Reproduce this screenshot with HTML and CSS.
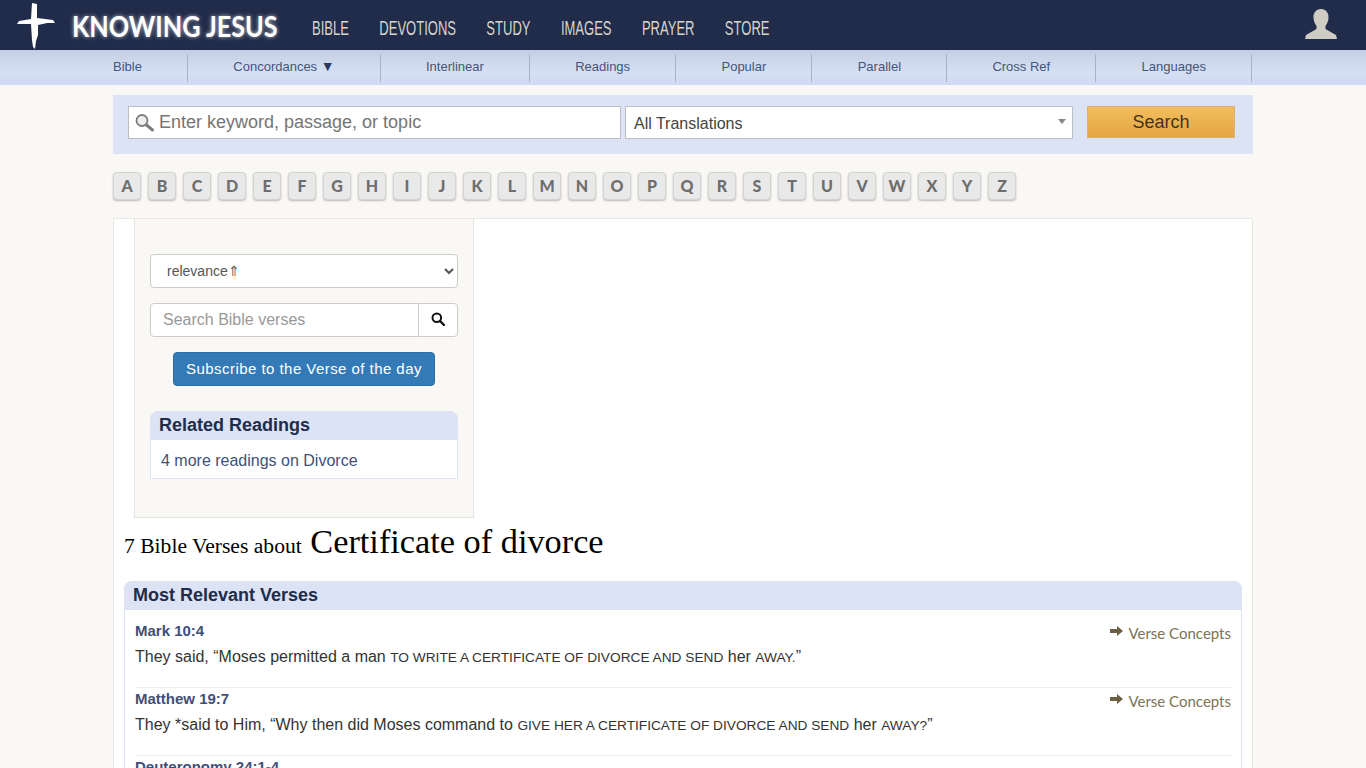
FILE: index.html
```html
<!DOCTYPE html>
<html lang="en">
<head>
    <meta charset="UTF-8">
    <title>7 Bible Verses about Certificate of divorce</title>
    <link rel="stylesheet" href="styles.css">
</head>
<body>

<!-- top bar -->
<header class="topbar">
    <a class="logo" href="#">
        <svg class="logo-cross" width="38" height="50" viewBox="0 0 38 50">
            <path fill="#fff" d="M15 3 L20 4 L20 18 L36 20 L38 23 L30 23 L21 25 L21 35 L19 41 L18 49 L16 47 L15 40 L14 24 L6 24 L0 24 L2 21 L14 19 Z"/>
        </svg>
        <span class="logo-text">KNOWING JESUS</span>
    </a>
    <nav class="mainnav">
        <a href="#">BIBLE</a>
        <a href="#">DEVOTIONS</a>
        <a href="#">STUDY</a>
        <a href="#">IMAGES</a>
        <a href="#">PRAYER</a>
        <a href="#">STORE</a>
    </nav>
    <svg class="user-icon" width="32" height="30" viewBox="0 0 32 30">
        <path fill="#cfccc4" d="M16 0 C21 0 24 4 23.500 9 C23.300 12 22 15 20.500 17 L20.500 20 L31 26 L32 30 L0 30 L1 26 L11.500 20 L11.500 17 C10 15 8.700 12 8.500 9 C8 4 11 0 16 0 Z"/>
    </svg>
</header>

<!-- second nav -->
<div class="subbar">
    <ul class="subnav">
        <li><a href="#">Bible</a></li>
        <li><a href="#">Concordances <span class="down">▼</span></a></li>
        <li><a href="#">Interlinear</a></li>
        <li><a href="#">Readings</a></li>
        <li><a href="#">Popular</a></li>
        <li><a href="#">Parallel</a></li>
        <li><a href="#">Cross Ref</a></li>
        <li><a href="#">Languages</a></li>
    </ul>
</div>

<div class="wrap">

    <form class="searchbar">
        <div class="keyword">
            <svg width="20" height="20" viewBox="0 0 20 20">
                <circle cx="7" cy="7.500" r="5.500" fill="#eee" stroke="#7d7d7d" stroke-width="1.800"/>
                <path d="M11.500 12 L17.500 17" stroke="#7d7d7d" stroke-width="3" stroke-linecap="round"/>
            </svg>
            <input type="text" placeholder="Enter keyword, passage, or topic">
        </div>
        <div class="translations">All Translations</div>
        <button type="button" class="search-btn">Search</button>
    </form>

    <div class="letters">
        <a href="#">A</a><a href="#">B</a><a href="#">C</a><a href="#">D</a><a href="#">E</a><a href="#">F</a><a href="#">G</a><a href="#">H</a><a href="#">I</a><a href="#">J</a><a href="#">K</a><a href="#">L</a><a href="#">M</a><a href="#">N</a><a href="#">O</a><a href="#">P</a><a href="#">Q</a><a href="#">R</a><a href="#">S</a><a href="#">T</a><a href="#">U</a><a href="#">V</a><a href="#">W</a><a href="#">X</a><a href="#">Y</a><a href="#">Z</a>
    </div>

    <main class="content">
        <aside class="sidebar">
            <select class="sort">
                <option>relevance⇑</option>
            </select>
            <div class="versesearch">
                <input type="text" placeholder="Search Bible verses">
                <button type="button">
                    <svg width="14" height="14" viewBox="0 0 14 14">
                        <circle cx="5.800" cy="5.800" r="4.300" fill="none" stroke="#111" stroke-width="2"/>
                        <path d="M9 9 L13 13" stroke="#111" stroke-width="2.400" stroke-linecap="round"/>
                    </svg>
                </button>
            </div>
            <a class="subscribe" href="#">Subscribe to the Verse of the day</a>
            <section class="panel related">
                <h3>Related Readings</h3>
                <div class="panel-body"><a href="#">4 more readings on Divorce</a></div>
            </section>
        </aside>

        <h1 class="title"><span class="count">7 Bible Verses about</span> Certificate of divorce</h1>

        <section class="panel verses">
            <h3>Most Relevant Verses</h3>
            <div class="panel-body">
                <article class="verse">
                    <a class="concepts" href="#">
                        <svg width="13" height="10" viewBox="0 0 13 10"><path fill="#6c5f42" d="M0 3 H7 V0 L13 5 L7 10 V7 H0 Z"/></svg>
                        Verse Concepts
                    </a>
                    <a class="ref" href="#">Mark 10:4</a>
                    <p>They said, “Moses permitted a man <span class="sc">to write a certificate of divorce and send</span> her <span class="sc">away.</span>”</p>
                </article>
                <article class="verse">
                    <a class="concepts" href="#">
                        <svg width="13" height="10" viewBox="0 0 13 10"><path fill="#6c5f42" d="M0 3 H7 V0 L13 5 L7 10 V7 H0 Z"/></svg>
                        Verse Concepts
                    </a>
                    <a class="ref" href="#">Matthew 19:7</a>
                    <p>They *said to Him, “Why then did Moses command to <span class="sc">give her a certificate of divorce and send</span> her <span class="sc">away?</span>”</p>
                </article>
                <article class="verse">
                    <a class="ref" href="#">Deuteronomy 24:1-4</a>
                </article>
            </div>
        </section>
    </main>
</div>

</body>
</html>
```

FILE: styles.css
```css
html, body {
    height: 768px;
    overflow: hidden;
}

body {
    margin: 0;
    background-color: #f9f8f5;
    font-family: "Liberation Sans", Arial, sans-serif;
    color: #333;
}

a {
    text-decoration: none;
}

/* top bar */
.topbar {
    display: flex;
    align-items: flex-start;
    height: 50px;
    padding-left: 17px;
    padding-right: 29px;
    background-color: #212c4a;
}

.logo {
    display: flex;
    align-items: flex-start;
}

.logo-text {
    margin-left: 17px;
    margin-top: 8px;
    font-family: Lato, sans-serif;
    font-weight: 700;
    font-size: 29px;
    line-height: 35px;
    color: #fff;
    text-shadow: 0 0 5px rgba(255, 255, 255, 0.7);
    transform: scaleX(0.87);
    transform-origin: left;
}

/* no narrow font here, so the row is squeezed */
.mainnav {
    display: flex;
    gap: 49px;
    margin-left: 4px;
    margin-top: 16px;
    transform: scaleX(0.62);
    transform-origin: left;
}

.mainnav a {
    font-size: 21px;
    line-height: 23px;
    color: #d8d5cb;
}

.user-icon {
    margin-left: auto;
    margin-top: 9px;
}

/* second nav */
.subbar {
    height: 35px;
    background: linear-gradient(#c5cfe3, #d5dff4 60%, #cfdaf3);
}

.subnav {
    display: flex;
    width: 1140px;
    height: 28px;
    margin: 0 auto;
    padding: 4px 0 0;
    list-style: none;
}

.subnav li {
    flex: none;
    padding: 0 45.2px;
    border-right: 1px solid #a9b1c2;
    font-size: 13px;
    line-height: 25px;
    white-space: nowrap;
}

.subnav li:first-child {
    padding-left: 0;
}

.subnav a {
    color: #44557b;
}

.subnav .down {
    color: #2a3a5f;
    font-size: 14px;
    line-height: 13px;
}

/* search strip */
.wrap {
    width: 1140px;
    margin: 0 auto;
}

.searchbar {
    display: flex;
    align-items: flex-start;
    height: 59px;
    margin-top: 10px;
    padding: 11px 18px 0 15px;
    box-sizing: border-box;
    background-color: #dce3f4;
}

.keyword {
    display: flex;
    align-items: center;
    width: 493px;
    height: 33px;
    box-sizing: border-box;
    padding-left: 6px;
    background-color: #fff;
    border: 1px solid #b9bdc6;
}

.keyword input {
    flex: 1;
    min-width: 0;
    margin-left: 4px;
    padding: 0;
    border: none;
    outline: none;
    font-family: inherit;
    font-size: 18px;
}

.keyword input::placeholder {
    color: #757575;
    opacity: 1;
}

.translations {
    position: relative;
    width: 448px;
    height: 33px;
    box-sizing: border-box;
    margin-left: 4px;
    padding-left: 8px;
    background-color: #fff;
    border: 1px solid #bcbfc6;
    font-size: 16px;
    line-height: 33px;
    color: #444;
}

.translations::after {
    content: "";
    position: absolute;
    top: 12px;
    right: 6px;
    border-top: 5px solid #888;
    border-left: 4px solid transparent;
    border-right: 4px solid transparent;
}

.search-btn {
    width: 148px;
    height: 32px;
    margin-left: 14px;
    padding: 0;
    background: linear-gradient(#f3bd5f, #e2a641);
    border: 1px solid #d8b27a;
    font-family: inherit;
    font-size: 18px;
    color: #44341d;
}

/* A-Z */
.letters {
    display: flex;
    gap: 7px;
    margin-top: 18px;
}

.letters a {
    width: 28px;
    height: 28px;
    box-sizing: border-box;
    background-color: #e9e9e9;
    border: 1px solid #d4d4d4;
    border-radius: 4px;
    box-shadow: 0 1px 2px rgba(0, 0, 0, 0.25);
    font-family: Lato, sans-serif;
    font-weight: 900;
    font-size: 16px;
    line-height: 26px;
    text-align: center;
    color: #6e6e6e;
}

/* main card */
.content {
    margin-top: 18px;
    padding: 0 10px 40px;
    background-color: #fff;
    border: 1px solid #e9e8e5;
}

.sidebar {
    width: 340px;
    height: 299px;
    box-sizing: border-box;
    margin-left: 10px;
    padding: 35px 15px 0;
    background-color: #f9f8f5;
    border: 1px solid #e6e5e2;
    border-top: none;
}

.sort {
    display: block;
    width: 100%;
    height: 34px;
    padding: 6px 12px;
    background-color: #fff;
    border: 1px solid #ccc;
    border-radius: 4px;
    font-family: inherit;
    font-size: 14px;
    color: #555;
}

.versesearch {
    display: flex;
    height: 34px;
    margin-top: 15px;
}

.versesearch input {
    flex: 1;
    min-width: 0;
    padding: 6px 12px;
    background-color: #fff;
    border: 1px solid #ccc;
    border-radius: 4px 0 0 4px;
    outline: none;
    font-family: inherit;
    font-size: 16px;
}

.versesearch input::placeholder {
    color: #999;
    opacity: 1;
}

.versesearch button {
    width: 40px;
    margin-left: -1px;
    padding: 0;
    background-color: #fff;
    border: 1px solid #ccc;
    border-radius: 0 4px 4px 0;
}

.subscribe {
    display: block;
    width: 262px;
    height: 34px;
    box-sizing: border-box;
    margin: 15px auto 0;
    background-color: #337ab7;
    border: 1px solid #2e6da4;
    border-radius: 4px;
    font-size: 15px;
    line-height: 32px;
    letter-spacing: 0.45px;
    text-align: center;
    color: #fff;
}

/* panels */
.panel h3 {
    margin: 0;
    height: 29px;
    padding-left: 9px;
    background-color: #dce3f4;
    border-radius: 8px 8px 0 0;
    font-size: 18px;
    line-height: 29px;
    color: #212c4a;
}

.panel-body {
    background-color: #fff;
    border: 1px solid #dce3f4;
    border-top: none;
}

.related {
    margin-top: 25px;
}

.related .panel-body {
    height: 38px;
    padding-left: 10px;
    font-size: 16px;
    line-height: 42px;
}

.related a {
    color: #3f5177;
}

/* heading */
.title {
    margin: 0;
    height: 63px;
    font-family: "Liberation Serif", serif;
    font-weight: 400;
    font-size: 34.3px;
    line-height: 46px;
    color: #000;
}

.count {
    font-size: 21.6px;
}

/* verse list */
.verses .panel-body {
    padding: 10px 10px 0;
}

.verse {
    height: 68px;
    box-sizing: border-box;
    padding-top: 1px;
    border-bottom: 1px solid #eee;
}

.ref {
    display: block;
    font-size: 15px;
    font-weight: 700;
    line-height: 20px;
    color: #3e5078;
}

.verse p {
    margin: 6px 0 0;
    font-size: 16px;
    line-height: 20px;
    color: #333;
}

.sc {
    font-size: 13.7px;
    text-transform: uppercase;
}

.concepts {
    float: right;
    margin-top: 2px;
    font-family: Lato, sans-serif;
    font-size: 15px;
    line-height: 20px;
    color: #7d7355;
}

.concepts svg {
    margin-right: 2px;
    vertical-align: 3px;
}
```
